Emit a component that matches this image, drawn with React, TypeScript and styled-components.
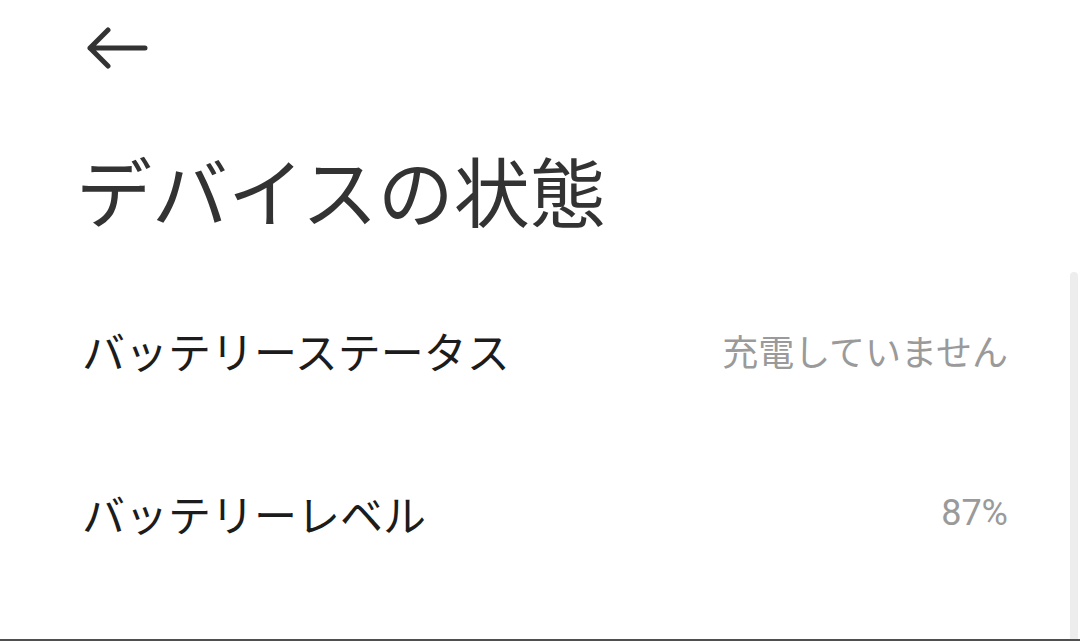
import React from 'react';
import styled, { createGlobalStyle } from 'styled-components';

// STYLES
const GlobalStyle = createGlobalStyle`
  html, body {
    margin: 0;
    padding: 0;
    background: #ffffff;
  }
  body {
    font-family: 'Noto Sans CJK JP', 'Noto Sans', sans-serif;
  }
`;

const Screen = styled.div`
  position: relative;
  width: 1080px;
  height: 641px;
  box-sizing: border-box;
  border-bottom: 2px solid #4f4f4f;
  overflow: hidden;
  background: #ffffff;
`;

const TopBar = styled.div`
  display: flex;
  align-items: center;
  height: 96px;
  padding-left: 86px;
`;

const BackButton = styled.button`
  display: flex;
  align-items: center;
  justify-content: center;
  padding: 0;
  border: none;
  background: none;
  color: #333333;
  cursor: pointer;
`;

const Title = styled.h1`
  margin: 0;
  padding: 45px 0 0 76px;
  font-size: 76px;
  font-weight: 400;
  line-height: 96px;
  color: #333333;
`;

const List = styled.div`
  display: flex;
  flex-direction: column;
  padding-top: 31px;
`;

const Row = styled.div`
  display: flex;
  align-items: center;
  justify-content: space-between;
  height: 163px;
  padding: 0 72px 0 82px;
`;

const Label = styled.span`
  font-size: 43px;
  color: #1c1c1c;
`;

// digits and % come from Roboto, kana/kanji fall through to Noto CJK
const Value = styled.span`
  font-family: Roboto, 'Noto Sans CJK JP', sans-serif;
  font-size: 36px;
  color: #9a9a9a;
`;

const ScrollTrack = styled.div`
  position: absolute;
  top: 272px;
  right: 2px;
  bottom: 0;
  width: 8px;
  border-radius: 4px 4px 0 0;
  background: #ededed;
`;

// COMPONENT
const rows = [
  { label: 'バッテリーステータス', value: '充電していません' },
  { label: 'バッテリーレベル', value: '87%' },
];

const App: React.FC = () => (
  <>
    <GlobalStyle />
    <Screen>
      <TopBar>
        <BackButton aria-label="戻る">
          <svg width="62" height="42" viewBox="0 0 62 42" fill="none">
            <path
              d="M4 21H59M22 3L4 21L22 39"
              stroke="currentColor"
              strokeWidth="5"
              strokeLinecap="round"
              strokeLinejoin="round"
            />
          </svg>
        </BackButton>
      </TopBar>

      <Title>デバイスの状態</Title>

      <List>
        {rows.map((row) => (
          <Row key={row.label}>
            <Label>{row.label}</Label>
            <Value>{row.value}</Value>
          </Row>
        ))}
      </List>

      <ScrollTrack />
    </Screen>
  </>
);

export default App;
